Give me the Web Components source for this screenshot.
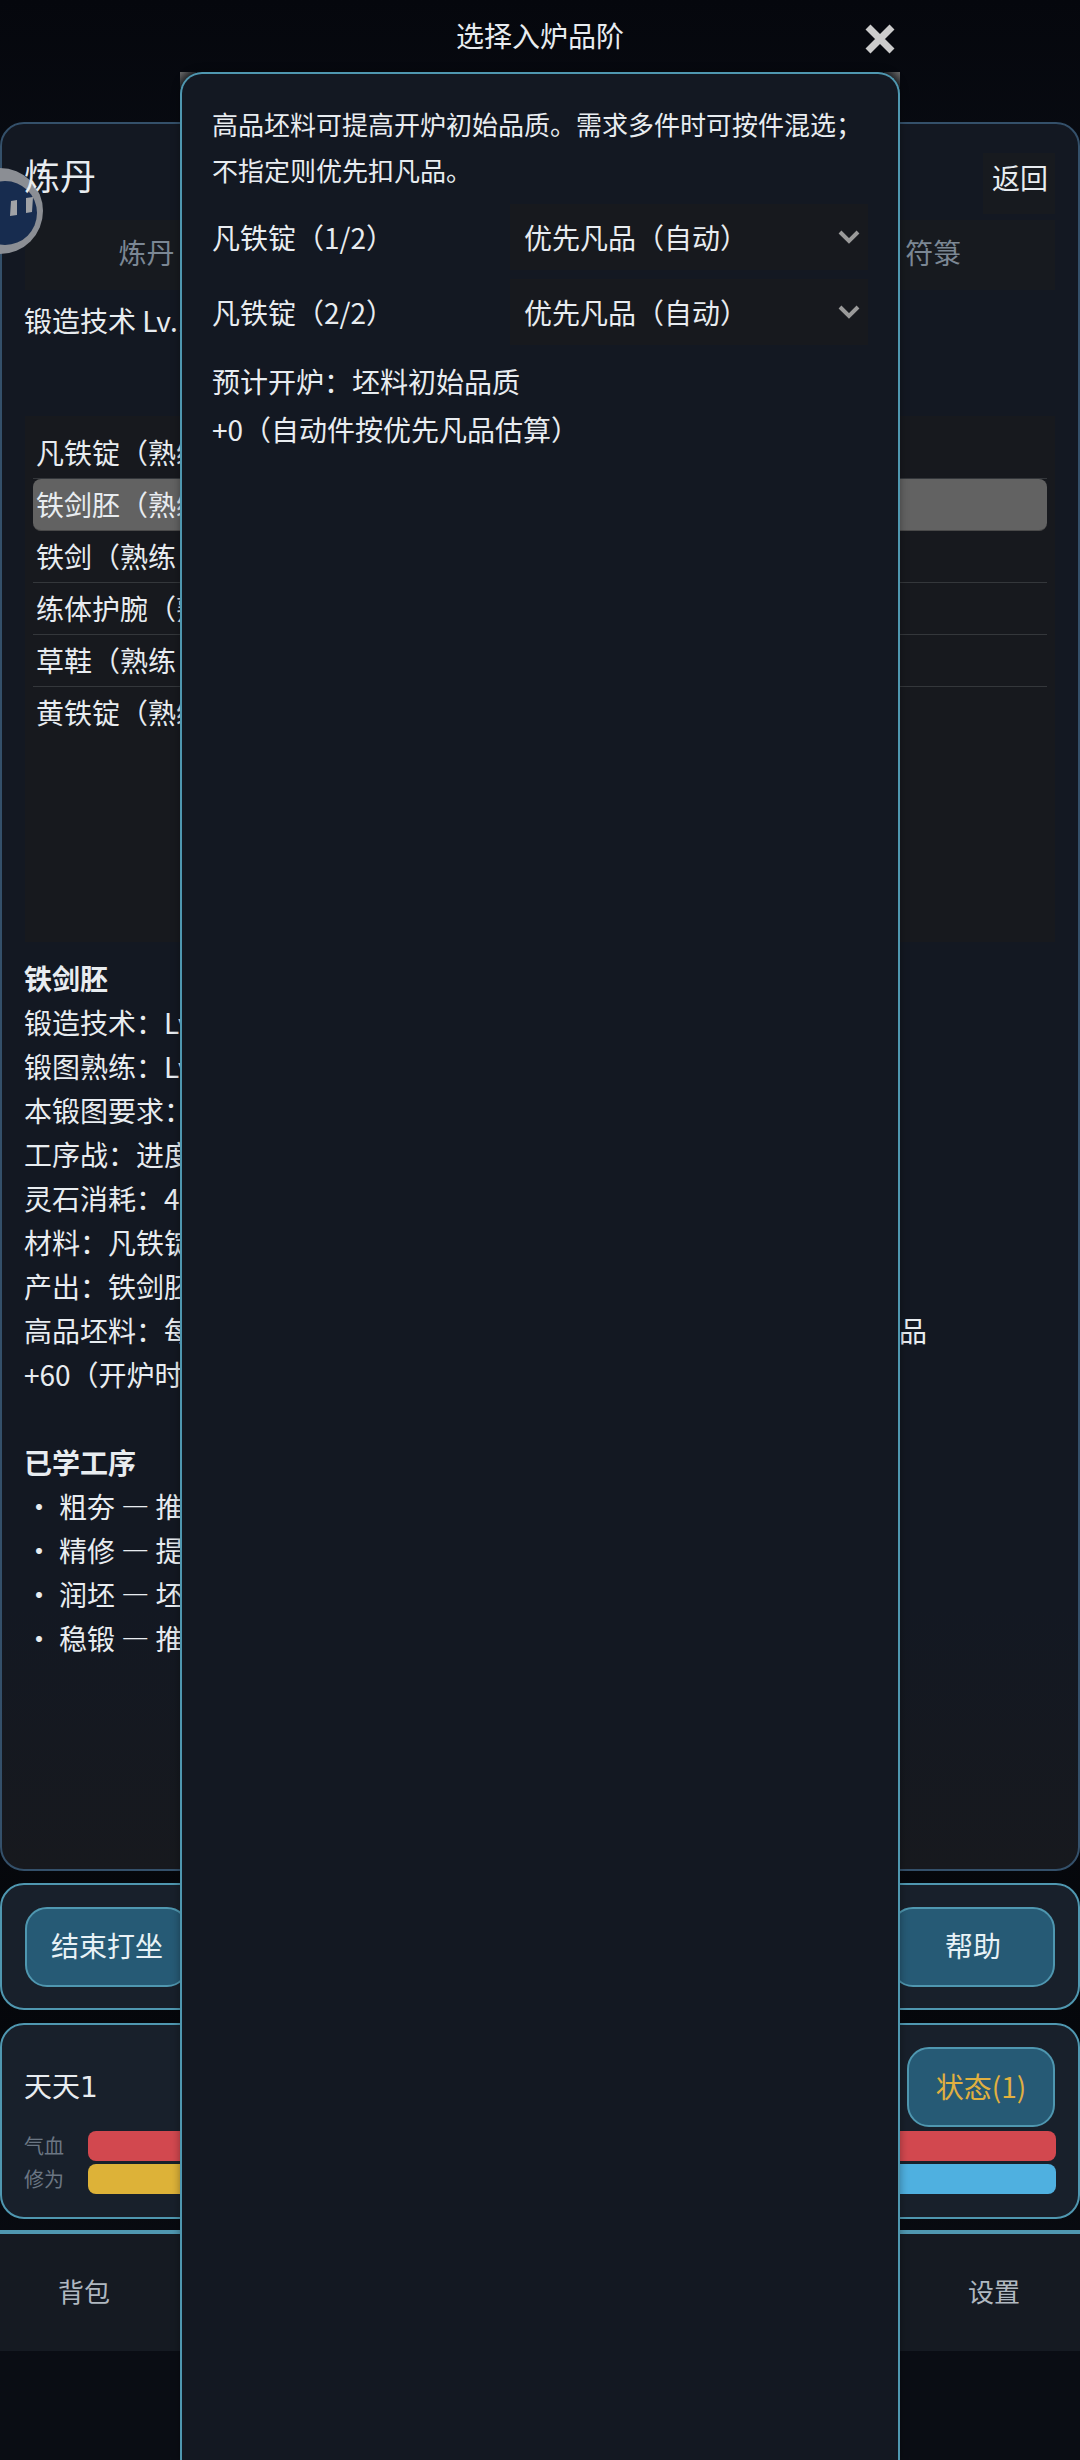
<!DOCTYPE html>
<html lang="zh-CN">
<head>
<meta charset="utf-8">
<title>选择入炉品阶</title>
<style>
    html, body { margin: 0; height: 2460px; overflow: hidden; background: #0a0d14; }
</style>
</head>
<body>
<game-page>
    <forge-panel>
        <recipe-row>凡铁锭（熟练</recipe-row>
        <recipe-row selected>铁剑胚（熟练</recipe-row>
        <recipe-row>铁剑（熟练</recipe-row>
        <recipe-row>练体护腕（熟练</recipe-row>
        <recipe-row>草鞋（熟练</recipe-row>
        <recipe-row last>黄铁锭（熟练</recipe-row>
    </forge-panel>
    <action-bar></action-bar>
    <status-card></status-card>
    <bottom-nav></bottom-nav>
</game-page>
<float-ball></float-ball>
<tier-dialog>
    <tier-select label="凡铁锭（1/2）" value="优先凡品（自动）"></tier-select>
    <tier-select label="凡铁锭（2/2）" value="优先凡品（自动）"></tier-select>
</tier-dialog>

<script>
const CJK = '"Noto Sans CJK SC", sans-serif';
const UI = '"DejaVu Sans", "Noto Sans CJK SC", sans-serif';

class GamePage extends HTMLElement {
    constructor()
    {
        super();
        this.attachShadow({mode: "open"}).innerHTML = `
            <style>
                :host {
                    display: flex;
                    flex-direction: column;
                    box-sizing: border-box;
                    height: 2460px;
                    padding-top: 122px;
                    color: #e8ecf0;
                    font: 28px/44px ${CJK};
                    background: linear-gradient(#05070d, #0a0d14 10%, #05070b 85%, #0a0d14 95%);
                }
            </style>
            <slot></slot>`;
    }
}

class ForgePanel extends HTMLElement {
    constructor()
    {
        super();
        this.attachShadow({mode: "open"}).innerHTML = `
            <style>
                :host {
                    display: block;
                    box-sizing: border-box;
                    height: 1749px;
                    padding: 29px 23px 0;
                    border: 2px solid #34506a;
                    border-radius: 24px;
                    background: linear-gradient(#131822, #131822 85%, #17191e);
                }
                header { display: flex; justify-content: space-between; align-items: center; height: 61px; }
                h1 { position: relative; z-index: 2; margin: -18px 0 0 -1px; font: 36px/61px ${CJK}; }
                .back { width: 72px; height: 61px; text-align: center; line-height: 49px; background: #171a1f; }
                .back span { position: relative; left: 1px; }
                .tabs {
                    display: grid;
                    grid-template-columns: repeat(4, 1fr);
                    gap: 19px;
                    height: 70px;
                    margin-top: 6px;
                    color: #7b8794;
                    line-height: 64px;
                    text-align: center;
                    background: #171a1f;
                }
                .level { margin: 8px 0 0 -1px; }
                .list { height: 526px; margin-top: 74px; padding: 11px 8px; box-sizing: border-box; background: #17191e; }
                .detail { margin: 14px 0 0 -1px; }
                b { font-weight: 700; }
                .wide { display: flex; justify-content: space-between; width: 903px; }
                .gap { margin-top: 44px; }
                .bullet i { display: inline-block; width: 34px; margin-left: 1px; font-style: normal; }
            </style>
            <header><h1>炼丹</h1><div class="back"><span>返回</span></div></header>
            <div class="tabs"><span>炼丹</span><span></span><span></span><span>符箓</span></div>
            <div class="level">锻造技术 Lv.1</div>
            <div class="list"><slot></slot></div>
            <div class="detail">
                <div><b>铁剑胚</b></div>
                <div>锻造技术：Lv.1</div>
                <div>锻图熟练：Lv.1</div>
                <div>本锻图要求：</div>
                <div>工序战：进度</div>
                <div>灵石消耗：4</div>
                <div>材料：凡铁锭</div>
                <div>产出：铁剑胚</div>
                <div class="wide"><span>高品坯料：每</span><span>品</span></div>
                <div>+60（开炉时</div>
                <div class="gap"><b>已学工序</b></div>
                <div class="bullet"><i>・</i>粗夯 — 推</div>
                <div class="bullet"><i>・</i>精修 — 提</div>
                <div class="bullet"><i>・</i>润坯 — 坯</div>
                <div class="bullet"><i>・</i>稳锻 — 推</div>
            </div>`;
    }
}

class RecipeRow extends HTMLElement {
    constructor()
    {
        super();
        this.attachShadow({mode: "open"}).innerHTML = `
            <style>
                :host {
                    display: block;
                    box-sizing: border-box;
                    height: 52px;
                    padding: 0 3px;
                    line-height: 50px;
                    white-space: nowrap;
                    border-bottom: 1px solid #34373b;
                }
                :host([selected]) { background: #626262; border-radius: 8px; border-bottom-color: #4a4a4a; }
                :host([last]) { border-bottom: 0; }
            </style>
            <slot></slot>`;
    }
}

class GameButton extends HTMLElement {
    constructor()
    {
        super();
        this.attachShadow({mode: "open"}).innerHTML = `
            <style>
                :host {
                    display: flex;
                    align-items: center;
                    justify-content: center;
                    box-sizing: border-box;
                    height: 80px;
                    padding-top: 2px;
                    border: 2px solid #4f97b0;
                    border-radius: 22px;
                    background: #265a75;
                    color: #e8f2f6;
                    font: 28px/1 ${UI};
                }
                :host([gold]) { padding: 0 0 2px; color: #e0b040; font-family: ${CJK}; }
            </style>
            <slot></slot>`;
    }
}

class ActionBar extends HTMLElement {
    constructor()
    {
        super();
        this.attachShadow({mode: "open"}).innerHTML = `
            <style>
                :host {
                    display: flex;
                    justify-content: space-between;
                    box-sizing: border-box;
                    height: 127px;
                    margin-top: 12px;
                    padding: 22px 23px;
                    border: 2px solid #4f97b0;
                    border-radius: 24px;
                    background: #18202b;
                }
                game-button { width: 164px; }
            </style>
            <game-button>结束打坐</game-button>
            <game-button>帮助</game-button>`;
    }
}

class StatusCard extends HTMLElement {
    constructor()
    {
        super();
        this.attachShadow({mode: "open"}).innerHTML = `
            <style>
                :host {
                    display: block;
                    box-sizing: border-box;
                    height: 196px;
                    margin-top: 13px;
                    padding: 22px 23px 0;
                    border: 2px solid #4f97b0;
                    border-radius: 24px;
                    background: #18202b;
                    font-family: ${UI};
                }
                .top { display: flex; justify-content: space-between; align-items: center; }
                .name { margin: 2px 0 0 -1px; }
                game-button { width: 148px; }
                .stat { display: flex; align-items: center; gap: 24px; height: 30px; margin-top: 3px; color: #6b7683; font-size: 20px; }
                .stat span { width: 40px; margin: 2px 0 0 -1px; }
                .bar { flex: 1; height: 30px; border-radius: 8px; margin-right: -1px; }
                .hp { background: #d2484f; }
                .xp { background: linear-gradient(90deg, #ddb238 50%, #4fb0e0 50%); }
                .top + .stat { margin-top: 4px; }
            </style>
            <div class="top"><span class="name">天天1</span><game-button gold>状态(1)</game-button></div>
            <div class="stat"><span>气血</span><div class="bar hp"></div></div>
            <div class="stat"><span>修为</span><div class="bar xp"></div></div>`;
    }
}

class BottomNav extends HTMLElement {
    constructor()
    {
        super();
        this.attachShadow({mode: "open"}).innerHTML = `
            <style>
                :host {
                    display: flex;
                    justify-content: space-between;
                    align-items: center;
                    box-sizing: border-box;
                    height: 121px;
                    margin-top: 11px;
                    border-top: 4px solid #4f97b0;
                    background: #151a22;
                    color: #b0b8c0;
                    font-size: 26px;
                    font-family: ${UI};
                }
                span { width: 168px; text-align: center; }
                span:last-child { margin-right: 2px; }
            </style>
            <span>背包</span><span>设置</span>`;
    }
}

class FloatBall extends HTMLElement {
    constructor()
    {
        super();
        this.attachShadow({mode: "open"}).innerHTML = `
            <style>
                :host { position: absolute; z-index: 1; left: 0; top: 166px; width: 46px; height: 90px; }
                svg { display: block; }
            </style>
            <svg width="46" height="90" viewBox="0 0 46 90">
                <circle cx="0" cy="45" r="43" fill="#8b8e94"/>
                <circle cx="5" cy="47" r="32" fill="#172c4f"/>
                <path d="M11 35l6-1v15l-7 1zM26 32l7-1-1 15-6 1z" fill="#a0a2a6"/>
            </svg>`;
    }
}

class TierSelect extends HTMLElement {
    constructor()
    {
        super();
        this.attachShadow({mode: "open"}).innerHTML = `
            <style>
                :host { display: flex; align-items: center; height: 66px; }
                .label { width: 298px; }
                .box {
                    display: flex;
                    align-items: center;
                    justify-content: space-between;
                    flex: 1;
                    box-sizing: border-box;
                    height: 66px;
                    padding: 0 8px 0 14px;
                    background: #17191e;
                }
                svg { display: block; }
            </style>
            <span class="label"></span>
            <div class="box">
                <span class="value"></span>
                <svg width="22" height="16" viewBox="0 0 22 16"><path d="M2 3l9 9 9-9" fill="none" stroke="#9a9a9a" stroke-width="4"/></svg>
            </div>`;
    }

    connectedCallback()
    {
        this.shadowRoot.querySelector(".label").textContent = this.getAttribute("label");
        this.shadowRoot.querySelector(".value").textContent = this.getAttribute("value");
    }
}

class TierDialog extends HTMLElement {
    constructor()
    {
        super();
        this.attachShadow({mode: "open"}).innerHTML = `
            <style>
                :host {
                    position: absolute;
                    z-index: 3;
                    left: 180px;
                    top: 0;
                    width: 720px;
                    color: #e8ecf0;
                    font: 28px/48px ${CJK};
                }
                .title { height: 72px; text-align: center; font-size: 28px; line-height: 71px; }
                .close { position: absolute; right: 5px; top: 24px; display: block; }
                .frame {
                    background:
                        linear-gradient(135deg, #6a6a6a, transparent 70%) 0 0 / 16px 16px no-repeat,
                        linear-gradient(225deg, #6a6a6a, transparent 70%) 100% 0 / 16px 16px no-repeat;
                }
                .body {
                    box-sizing: border-box;
                    height: 2388px;
                    padding: 27px 30px 0;
                    border: 2px solid #4f97b0;
                    border-bottom: 0;
                    border-radius: 22px 22px 0 0;
                    background: #131822;
                    box-shadow: 0 0 8px rgba(0, 0, 0, .35);
                }
                .note { margin: 0; font-size: 26px; line-height: 46px; }
                .rows { display: flex; flex-direction: column; gap: 9px; margin: 11px 0 12px; }
            </style>
            <div class="title">选择入炉品阶</div>
            <svg class="close" width="30" height="30" viewBox="0 0 30 30"><path d="M3 3l24 24M27 3L3 27" stroke="#cccccc" stroke-width="7"/></svg>
            <div class="frame">
                <div class="body">
                    <p class="note">高品坯料可提高开炉初始品质。需求多件时可按件混选；<br>不指定则优先扣凡品。</p>
                    <div class="rows"><slot></slot></div>
                    <div>预计开炉：坯料初始品质</div>
                    <div>+0（自动件按优先凡品估算）</div>
                </div>
            </div>`;
    }
}

customElements.define("game-page", GamePage);
customElements.define("forge-panel", ForgePanel);
customElements.define("recipe-row", RecipeRow);
customElements.define("game-button", GameButton);
customElements.define("action-bar", ActionBar);
customElements.define("status-card", StatusCard);
customElements.define("bottom-nav", BottomNav);
customElements.define("float-ball", FloatBall);
customElements.define("tier-select", TierSelect);
customElements.define("tier-dialog", TierDialog);
</script>
</body>
</html>
